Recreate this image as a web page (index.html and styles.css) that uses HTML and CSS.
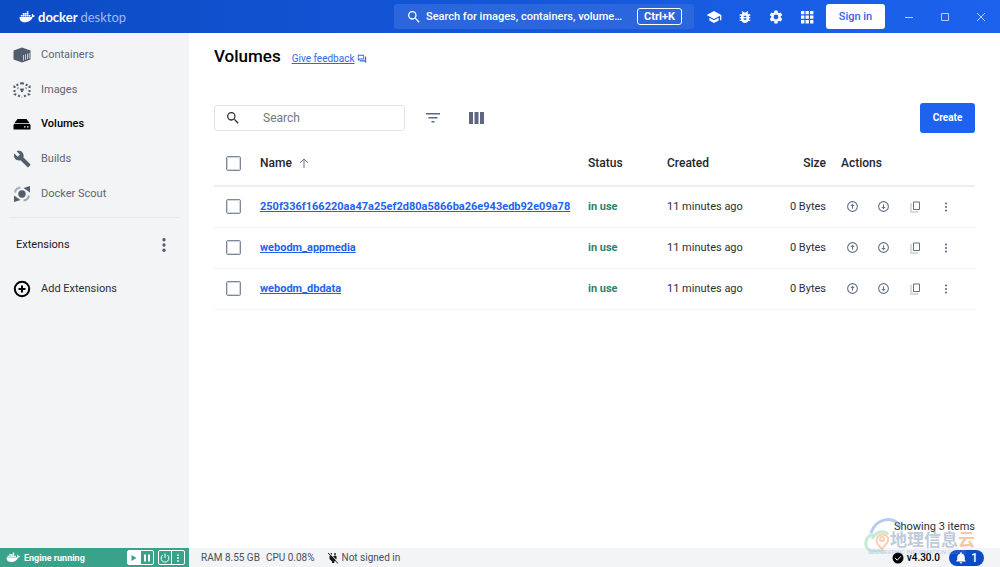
FILE: index.html
```html
<!DOCTYPE html>
<html lang="en">
<head>
<meta charset="utf-8">
<title>Docker Desktop</title>
<link rel="stylesheet" href="styles.css">
</head>
<body>
<svg class="sprite" aria-hidden="true">
  <symbol id="whale" viewBox="0 0 32 24">
    <path d="M1 12h22.500c1.500 0 2.400-.4 2.900-1-1.200-1.800-1-4 .3-5.600 1.500 1 2.200 2.200 2.300 3.600 1.200-.2 2.300 0 3 .6-.9 1.900-2.600 2.500-4.500 2.500C25 18.500 20.500 22.500 12.500 22.500 5 22.500 1 19 1 12z"/>
    <path d="M3.500 8h3.400v3.200H3.500zM7.500 8h3.400v3.200H7.500zM11.500 8h3.400v3.200h-3.400zM15.500 8h3.400v3.200h-3.400zM19.500 8h3.400v3.200h-3.400zM7.500 4.200h3.400v3.200H7.500zM11.500 4.200h3.400v3.200h-3.400zM15.500 4.200h3.400v3.200h-3.400zM15.500.5h3.400v3.100h-3.400z"/>
  </symbol>
  <symbol id="search" viewBox="0 0 24 24"><path d="M15.500 14h-.8l-.3-.3A6.500 6.500 0 1 0 13.700 14.400l.3.3v.8l5 5 1.500-1.500zM9.500 14a4.500 4.500 0 1 1 0-9 4.500 4.500 0 0 1 0 9z"/></symbol>
  <symbol id="more" viewBox="0 0 24 24"><circle cx="12" cy="5" r="2.200"/><circle cx="12" cy="12" r="2.200"/><circle cx="12" cy="19" r="2.200"/></symbol>
  <symbol id="up" viewBox="0 0 24 24"><path d="M12 2a10 10 0 1 0 0 20 10 10 0 0 0 0-20zm0 18a8 8 0 1 1 0-16 8 8 0 0 1 0 16z"/><path d="M12 7l-4 4h3v5h2v-5h3z"/></symbol>
  <symbol id="down" viewBox="0 0 24 24"><path d="M12 2a10 10 0 1 0 0 20 10 10 0 0 0 0-20zm0 18a8 8 0 1 1 0-16 8 8 0 0 1 0 16z"/><path d="M12 17l-4-4h3V8h2v5h3z"/></symbol>
  <symbol id="clone" viewBox="0 0 24 24"><path d="M20 1H10a2 2 0 0 0-2 2v13c0 1.100.9 2 2 2h10a2 2 0 0 0 2-2V3a2 2 0 0 0-2-2zm0 15H10V3h10z"/><path d="M3 5h2v2H3zM3 9h2v2H3zM3 13h2v2H3zM3 17h2v2H3zM3 21h2v2H3zM7 21h2v2H7zM11 21h2v2h-2zM15 21h2v2h-2z"/></symbol>
</svg>
<div class="app">
  <header class="topbar">
    <div class="brand">
      <svg class="brand-whale"><use href="#whale"/></svg>
      <span class="brand-name">docker <span class="brand-light">desktop</span></span>
    </div>
    <div class="topbar-right">
      <button class="global-search" type="button">
        <svg class="icon-16"><use href="#search"/></svg>
        <span class="global-search-text">Search for images, containers, volume…</span>
        <kbd class="shortcut">Ctrl+K</kbd>
      </button>
      <nav class="tools" aria-label="Tools">
        <button class="icon-button" type="button" aria-label="Learning center"><svg class="icon-16" viewBox="0 0 24 24"><path d="M5 13.200v4L12 21l7-3.800v-4L12 17zM12 3L1 9l11 6 9-4.900V17h2V9z"/></svg></button>
        <button class="icon-button" type="button" aria-label="Troubleshoot"><svg class="icon-16" viewBox="0 0 24 24"><path d="M20 8h-2.800a6 6 0 0 0-1.800-2L17 4.400 15.600 3l-2.200 2.200a6 6 0 0 0-2.800 0L8.400 3 7 4.400 8.600 6a6 6 0 0 0-1.800 2H4v2h2.100L6 11v1H4v2h2v1l.1 1H4v2h2.800a6 6 0 0 0 10.400 0H20v-2h-2.100l.1-1v-1h2v-2h-2v-1l-.1-1H20zm-6 8h-4v-2h4zm0-4h-4v-2h4z"/></svg></button>
        <button class="icon-button" type="button" aria-label="Settings"><svg class="icon-16" viewBox="0 0 24 24"><path d="M19.140 12.940a7 7 0 0 0 0-1.880l2.030-1.580a.5.5 0 0 0 .12-.61l-1.920-3.320a.5.5 0 0 0-.59-.22l-2.390.96a7 7 0 0 0-1.620-.94l-.36-2.540a.5.5 0 0 0-.48-.41h-3.840a.5.5 0 0 0-.47.41l-.36 2.540a7 7 0 0 0-1.620.94l-2.390-.96a.5.500 0 0 0-.59.22L2.740 8.870a.5.500 0 0 0 .12.610l2.030 1.580a7 7 0 0 0 0 1.880l-2.030 1.580a.5.500 0 0 0-.12.610l1.920 3.320c.12.220.370.290.590.220l2.390-.96c.5.380 1.030.7 1.620.94l.36 2.540c.05.240.240.410.480.410h3.840c.24 0 .44-.17.470-.41l.36-2.540a7 7 0 0 0 1.620-.94l2.390.96c.22.080.470 0 .59-.22l1.920-3.320a.5.500 0 0 0-.12-.61zM12 15.600a3.600 3.600 0 1 1 0-7.200 3.600 3.600 0 0 1 0 7.200z"/></svg></button>
        <button class="icon-button" type="button" aria-label="Apps"><svg class="icon-16" viewBox="0 0 24 24"><path d="M3 3h5v5H3zM9.800 3h5v5h-5zM16.600 3h5v5h-5zM3 9.800h5v5H3zM9.800 9.800h5v5h-5zM16.600 9.800h5v5h-5zM3 16.600h5v5H3zM9.800 16.600h5v5h-5zM16.600 16.600h5v5h-5z"/></svg></button>
      </nav>
      <button class="sign-in" type="button">Sign in</button>
      <div class="window-controls">
        <button class="window-button" type="button" aria-label="Minimize"><svg class="icon-line" viewBox="0 0 10 10"><path d="M1 5.500h8"/></svg></button>
        <button class="window-button" type="button" aria-label="Maximize"><svg class="icon-line" viewBox="0 0 10 10"><path d="M1.500 1.500h7v7h-7z"/></svg></button>
        <button class="window-button" type="button" aria-label="Close"><svg class="icon-line" viewBox="0 0 10 10"><path d="M1 1l8 8M9 1L1 9"/></svg></button>
      </div>
    </div>
  </header>

  <aside class="sidebar">
    <nav class="menu" aria-label="Main">
      <a class="menu-item" href="#containers"><svg class="icon-18" viewBox="0 0 18 18"><path d="M9 1.500l8.500 3v9L9 16.500l-8.500-3v-9z"/><path class="slats" d="M10.500 9v5.500M12.500 8.300v5.500M14.500 7.600v5.500M16.300 7v5.500"/></svg>Containers</a>
      <a class="menu-item" href="#images"><svg class="icon-18 dashed" viewBox="0 0 18 18"><path d="M9 2L1.500 5v8L9 16.200M9 2l7.500 3v8L9 16.200"/><path d="M9 9L4.500 7M9 9l4.500-2M9 9v4"/></svg>Images</a>
      <a class="menu-item active" href="#volumes"><svg class="icon-18" viewBox="0 0 18 18"><path d="M4.500 4h9l3 4h-15zM2 8.800h14a1.500 1.500 0 0 1 1.500 1.500v4.200H.5v-4.200A1.500 1.500 0 0 1 2 8.800zm9 2.400v1.300h1.500v-1.300zm3 0v1.300h1.500v-1.300z" fill-rule="evenodd"/></svg>Volumes</a>
      <a class="menu-item" href="#builds"><svg class="icon-18" viewBox="0 0 24 24"><path d="M23 19l-9.200-9.200c.9-2.300.4-5-1.500-6.900-2-2-5-2.400-7.400-1.300L9.200 5.900l-3 3L1.800 4.600C.6 7 1.100 10 3.100 12c1.900 1.900 4.600 2.400 6.900 1.500l9.200 9.200c.4.4 1 .4 1.400 0l2.400-2.300c.4-.4.400-1 0-1.400z"/></svg>Builds</a>
      <a class="menu-item" href="#scout"><svg class="icon-18" viewBox="0 0 18 18"><circle cx="9" cy="9" r="3.700"/><path d="M17 1v6.500L10.500 3zM1 17v-6.500L7.500 15z"/><path class="scout-ring" d="M2 7.500C2.500 4.500 4 3 7.500 2.500M16 10.500c-.5 3-2 4.500-5.500 5"/></svg>Docker Scout</a>
    </nav>
    <section class="extensions">
      <div class="extensions-head">
        <h2 class="extensions-title">Extensions</h2>
        <button class="icon-button" type="button" aria-label="Extension options"><svg class="icon-18"><use href="#more"/></svg></button>
      </div>
    </section>
    <a class="menu-item add" href="#add"><svg class="icon-18" viewBox="0 0 18 18"><path class="plus" d="M9 1.800a7.200 7.200 0 1 0 0 14.400A7.200 7.200 0 0 0 9 1.800zM9 5.500v7M5.500 9h7"/></svg>Add Extensions</a>
  </aside>

  <main class="content">
    <div class="title-row">
      <h1 class="title">Volumes</h1>
      <a class="feedback" href="#feedback"><span class="feedback-text">Give feedback</span><svg class="icon-10" viewBox="0 0 24 24"><path d="M15 4v7H5.200L4 12.200V4zm1-2H3a1 1 0 0 0-1 1v14l4-4h10a1 1 0 0 0 1-1V3a1 1 0 0 0-1-1zm5 4h-2v9H6v2a1 1 0 0 0 1 1h11l4 4V7a1 1 0 0 0-1-1z"/></svg></a>
    </div>
    <div class="toolbar">
      <label class="search-box">
        <svg class="icon-16"><use href="#search"/></svg>
        <input class="search-input" type="text" placeholder="Search" aria-label="Search volumes">
      </label>
      <button class="icon-button filter" type="button" aria-label="Filter"><svg class="icon-18" viewBox="0 0 18 18"><path d="M2 4h14v1.500H2zM4.500 8h9v1.500h-9zM7.500 12h3v1.500h-3z"/></svg></button>
      <button class="icon-button columns" type="button" aria-label="Columns"><svg class="icon-18" viewBox="0 0 18 18"><path d="M1 3h4v12H1zM6.500 3h4v12h-4zM12 3h4v12h-4z"/></svg></button>
      <button class="create" type="button">Create</button>
    </div>
    <table class="volumes">
      <colgroup><col class="col-check"><col><col class="col-status"><col class="col-created"><col class="col-size"><col class="col-actions"></colgroup>
      <thead>
        <tr>
          <th class="cell-check"><input class="check" type="checkbox" aria-label="Select all"></th>
          <th><span class="sort">Name <svg class="icon-12" viewBox="0 0 12 12"><path class="arrow" d="M6 11V2M2 6l4-4 4 4"/></svg></span></th>
          <th>Status</th><th>Created</th><th class="cell-size">Size</th><th class="cell-actions">Actions</th>
        </tr>
      </thead>
      <tbody>
        <tr>
          <td class="cell-check"><input class="check" type="checkbox" aria-label="Select 250f336f"></td>
          <td class="cell-name"><a class="name" href="#v1">250f336f166220aa47a25ef2d80a5866ba26e943edb92e09a78</a></td>
          <td class="status">in use</td><td>11 minutes ago</td><td class="cell-size">0 Bytes</td>
          <td class="cell-actions"><div class="actions"><button class="icon-button" type="button" aria-label="Export"><svg class="icon-13"><use href="#up"/></svg></button><button class="icon-button" type="button" aria-label="Import"><svg class="icon-13"><use href="#down"/></svg></button><button class="icon-button" type="button" aria-label="Clone"><svg class="icon-12"><use href="#clone"/></svg></button><button class="icon-button" type="button" aria-label="More"><svg class="icon-12"><use href="#more"/></svg></button></div></td>
        </tr>
        <tr>
          <td class="cell-check"><input class="check" type="checkbox" aria-label="Select webodm_appmedia"></td>
          <td class="cell-name"><a class="name" href="#v2">webodm_appmedia</a></td>
          <td class="status">in use</td><td>11 minutes ago</td><td class="cell-size">0 Bytes</td>
          <td class="cell-actions"><div class="actions"><button class="icon-button" type="button" aria-label="Export"><svg class="icon-13"><use href="#up"/></svg></button><button class="icon-button" type="button" aria-label="Import"><svg class="icon-13"><use href="#down"/></svg></button><button class="icon-button" type="button" aria-label="Clone"><svg class="icon-12"><use href="#clone"/></svg></button><button class="icon-button" type="button" aria-label="More"><svg class="icon-12"><use href="#more"/></svg></button></div></td>
        </tr>
        <tr>
          <td class="cell-check"><input class="check" type="checkbox" aria-label="Select webodm_dbdata"></td>
          <td class="cell-name"><a class="name" href="#v3">webodm_dbdata</a></td>
          <td class="status">in use</td><td>11 minutes ago</td><td class="cell-size">0 Bytes</td>
          <td class="cell-actions"><div class="actions"><button class="icon-button" type="button" aria-label="Export"><svg class="icon-13"><use href="#up"/></svg></button><button class="icon-button" type="button" aria-label="Import"><svg class="icon-13"><use href="#down"/></svg></button><button class="icon-button" type="button" aria-label="Clone"><svg class="icon-12"><use href="#clone"/></svg></button><button class="icon-button" type="button" aria-label="More"><svg class="icon-12"><use href="#more"/></svg></button></div></td>
        </tr>
      </tbody>
    </table>
    <p class="count">Showing 3 items</p>
  </main>

  <footer class="statusbar">
    <div class="engine">
      <svg class="engine-whale"><use href="#whale"/></svg>
      <span class="engine-text">Engine running</span>
      <div class="engine-group">
        <button class="engine-button play" type="button" aria-label="Start"><svg class="icon-10" viewBox="0 0 10 10"><path d="M2.500 2l5 3-5 3z"/></svg></button>
        <button class="engine-button" type="button" aria-label="Pause"><svg class="icon-10" viewBox="0 0 10 10"><path d="M2 1.500h2v7H2zM6 1.500h2v7H6z"/></svg></button>
      </div>
      <div class="engine-group">
        <button class="engine-button" type="button" aria-label="Power"><svg class="icon-10" viewBox="0 0 10 10"><path class="power" d="M5 .5v4.500M2.500 2.200a3.900 3.900 0 1 0 5 0"/></svg></button>
        <button class="engine-button" type="button" aria-label="Engine options"><svg class="icon-10"><use href="#more"/></svg></button>
      </div>
    </div>
    <div class="info">
      <span class="stat">RAM 8.55 GB</span>
      <span class="stat">CPU 0.08%</span>
      <span class="account"><svg class="icon-12" viewBox="0 0 12 12"><path d="M3.500 1h1.400v2.500H3.500zM7.300 1h1.400v2.500H7.300zM2.500 4h7v3L7.300 9.500V11H5V9.500L2.500 7z"/><path class="slash-gap" d="M2 .5l9.500 10"/><path class="slash" d="M1 1l10 10.500"/></svg>Not signed in</span>
    </div>
    <div class="version"><svg class="icon-12" viewBox="0 0 12 12"><circle cx="6" cy="6" r="5.500"/><path class="tick" d="M3.200 6.200l2 2 3.800-4"/></svg>v4.30.0</div>
    <button class="notices" type="button"><svg class="icon-12" viewBox="0 0 24 24"><path d="M12 23a2.500 2.500 0 0 0 2.500-2.500h-5A2.500 2.500 0 0 0 12 23zm7.500-7v-5.500c0-3.500-2-6.400-5.500-7.200V2.500a2 2 0 0 0-4 0v.8c-3.500.8-5.500 3.700-5.500 7.200V16l-2 2v1.200h19V18z"/></svg>1</button>
  </footer>

  <div class="watermark">
    <svg class="watermark-logo" viewBox="0 0 112 40">
      <path class="mark-blue" d="M7 16C12 1 29-2 37 10"/>
      <path class="mark-green" d="M9 17C0 20-1 32 8 34h12"/>
      <path class="mark-green" d="M8 22c4-8 12-9 16-5"/>
      <path class="mark-orange" d="M18 32c-6-6-6-8-5-11a6 6 0 0 1 11 0c1 3-1 5-6 11z"/>
      <circle class="mark-orange" cx="18" cy="22" r="2"/>
    </svg>
    <span class="watermark-name">地理信息<span class="watermark-cloud">云</span></span>
    <span class="watermark-sub">GEOGRAPHIC INFORMATION CLOUD</span>
  </div>
</div>
</body>
</html>
```
FILE: styles.css
```css
* { box-sizing: border-box; }
body { margin: 0; font: 12px/16px Roboto, "Noto Sans", sans-serif; color: #2b2f36; background: #fff; }
button { font: inherit; color: inherit; border: 0; padding: 0; background: none; }
svg { display: block; flex: none; fill: currentColor; }
a { color: inherit; text-decoration: none; }
h1, h2, p { margin: 0; font-weight: 400; }
.sprite { position: absolute; width: 0; height: 0; }
.icon-10 { width: 10px; height: 10px; }
.icon-12 { width: 12px; height: 12px; }
.icon-13 { width: 13px; height: 13px; }
.icon-16 { width: 16px; height: 16px; }
.icon-18 { width: 18px; height: 18px; }
.icon-line { width: 10px; height: 10px; fill: none; stroke: #b9cdf8; }
.icon-button { display: flex; align-items: center; justify-content: center; }

.app { position: relative; min-height: 100vh; display: grid; grid-template: 33px 1fr 19px / 189px 1fr; }

.topbar { grid-column: 1 / 3; display: flex; align-items: center; justify-content: space-between; padding-left: 19px; color: #fff; background: linear-gradient(90deg, #0b4bc4, #1c62ed); }
.brand { display: flex; align-items: center; gap: 3px; }
.brand-whale { width: 16px; height: 12px; }
.brand-name { font: 700 13px/18px Lato, sans-serif; }
.brand-light { font-weight: 400; color: #9dbcf5; }
.topbar-right { display: flex; align-items: center; }
.global-search { display: flex; align-items: center; gap: 4px; width: 300px; height: 25px; padding: 0 12px; border-radius: 3px; background: #2c66dc; }
.global-search-text { flex: 1; text-align: left; white-space: nowrap; font-size: 11px; font-weight: 500; }
.shortcut { flex: none; font: 700 11px/15px Roboto, sans-serif; width: 45px; text-align: center; border: 1px solid #fff; border-radius: 3px; }
.tools { display: flex; gap: 15px; padding: 0 11px 0 12px; }
.sign-in { width: 59px; height: 25px; border-radius: 3px; background: #fff; color: #3264e8; font-size: 11px; font-weight: 500; }
.window-controls { display: flex; gap: 26px; padding: 0 14px 0 19px; }

.sidebar { background: #f3f4f6; }
.menu { display: grid; grid-auto-rows: 1fr; height: 185px; margin: 0 9px; padding: 5px 0 6px; border-bottom: 1px solid #e6e8ec; }
.menu-item { display: flex; align-items: center; gap: 10px; padding-left: 4px; font-size: 11px; color: #5c6675; }
.menu-item svg { color: #525d6e; }
.menu-item.active, .menu-item.active svg { color: #000; }
.menu-item.active { font-weight: 500; }
.slats { fill: none; stroke: #c3c8d0; }
.dashed { fill: none; stroke: currentColor; stroke-width: 2; stroke-dasharray: 2 2; }
.scout-ring { fill: none; stroke: #a3aab5; stroke-width: 2; }
.extensions { padding: 13px 16px; }
.extensions-head { display: flex; justify-content: space-between; align-items: center; height: 28px; color: #525d6e; }
.extensions-title { font-size: 11px; color: #17191e; }
.menu-item.add { height: 34px; padding-left: 13px; color: #2b2f36; }
.menu-item.add svg { color: #000; }
.plus { fill: none; stroke: currentColor; stroke-width: 2; }

.content { display: flex; flex-direction: column; padding: 12px 25px 13px; min-width: 0; }
.title-row { display: flex; align-items: center; gap: 11px; height: 22px; }
.title { font-size: 17px; font-weight: 500; line-height: 22px; color: #000; }
.feedback { display: flex; align-items: center; gap: 3px; padding-top: 6px; font-size: 10px; color: #2f66e8; }
.feedback-text { text-decoration: underline; }
.toolbar { display: flex; align-items: center; height: 30px; margin-top: 36px; color: #5d6880; }
.search-box { display: flex; align-items: center; gap: 22px; width: 191px; height: 26px; padding: 0 10px; border: 1px solid #dfe2e6; border-radius: 3px; color: #30343b; }
.search-input { width: 100%; min-width: 0; border: 0; padding: 0; outline: 0; font: inherit; background: none; }
.search-input::placeholder { color: #707780; opacity: 1; }
.filter { margin-left: 19px; }
.columns { margin-left: 26px; }
.create { width: 55px; height: 30px; margin-left: auto; border-radius: 3px; background: #1d63ed; color: #fff; font-size: 10px; font-weight: 700; }

.volumes { width: 100%; margin-top: 8px; border-collapse: collapse; table-layout: fixed; }
.col-check { width: 40px; }
.col-status { width: 79px; }
.col-created { width: 93px; }
.col-size { width: 78px; }
.col-actions { width: 143px; }
.volumes th, .volumes td { height: 41px; padding: 0 6px; text-align: left; border-bottom: 1px solid #f3f4f5; white-space: nowrap; }
.volumes td { font-size: 11px; }
.volumes th { height: 45px; font-weight: 500; border-bottom: 2px solid #eceef0; color: #24262b; }
.volumes .cell-check { padding: 0 0 0 12px; }
.volumes .cell-name { padding-right: 0; overflow: hidden; }
.volumes .cell-size { text-align: right; }
.volumes .cell-actions { padding: 0 9px; }
.volumes td.cell-actions { padding: 0 13px; }
.sort { display: flex; align-items: center; gap: 6px; }
.arrow { fill: none; stroke: #6b778a; }
.check { display: block; appearance: none; width: 15px; height: 15px; margin: 0; border: 1px solid #7b889d; border-radius: 2px; outline: 1px solid #cfd4dc; outline-offset: -2px; }
.name { font-weight: 700; color: #1d63ed; text-decoration: underline; }
.volumes .status { font-weight: 700; color: #2e7f70; }
.actions { display: flex; justify-content: space-between; width: 108px; color: #64708a; }
.actions .icon-button { width: 14px; }
.count { margin-top: auto; text-align: right; font-size: 11px; }

.statusbar { grid-column: 1 / 3; display: flex; align-items: center; padding-right: 16px; background: #f3f4f6; font-size: 10px; }
.engine { display: flex; align-items: center; align-self: stretch; width: 189px; padding: 0 4px 0 6px; gap: 4px; background: #39a28b; color: #fff; }
.engine-whale { width: 14px; height: 11px; }
.engine-text { flex: 1; font-size: 9px; font-weight: 700; }
.engine-group { display: flex; border: 1px solid #fff; border-radius: 2px; }
.engine-button { display: flex; align-items: center; justify-content: center; width: 12px; height: 13px; }
.engine-button + .engine-button { width: 13px; border-left: 1px solid #fff; }
.play { background: #fff; color: #39a28b; }
.power { fill: none; stroke: currentColor; }
.info { flex: 1; display: flex; gap: 6px; padding-left: 12px; color: #4a4f58; }
.account { display: flex; align-items: center; gap: 3px; padding-left: 6px; }
.account svg { color: #16181c; }
.slash { fill: none; stroke: currentColor; }
.slash-gap { fill: none; stroke: #f3f4f6; }
.version { display: flex; align-items: center; gap: 3px; font-weight: 500; color: #000; }
.tick { fill: none; stroke: #fff; }
.notices { display: flex; align-items: center; justify-content: center; gap: 4px; width: 35px; height: 16px; margin-left: 9px; border-radius: 8px; background: #0d4bc6; color: #fff; font-weight: 500; font-size: 12px; }

.watermark { position: absolute; right: 22px; bottom: 10px; width: 114px; height: 40px; opacity: .5; pointer-events: none; }
.watermark-logo { width: 112px; height: 40px; fill: none; stroke-width: 3; }
.mark-blue { stroke: #6c9be0; }
.mark-green { stroke: #8fd8ab; }
.mark-orange { stroke: #f3a26d; stroke-width: 2; }
.watermark-name { position: absolute; left: 26px; top: 12px; font: 700 17px/20px "Noto Sans CJK SC", sans-serif; color: #8096b8; white-space: nowrap; }
.watermark-cloud { color: #f0905a; }
.watermark-sub { position: absolute; left: 4px; top: 31px; font-size: 6px; line-height: 8px; color: #7ba3e0; white-space: nowrap; }
```
